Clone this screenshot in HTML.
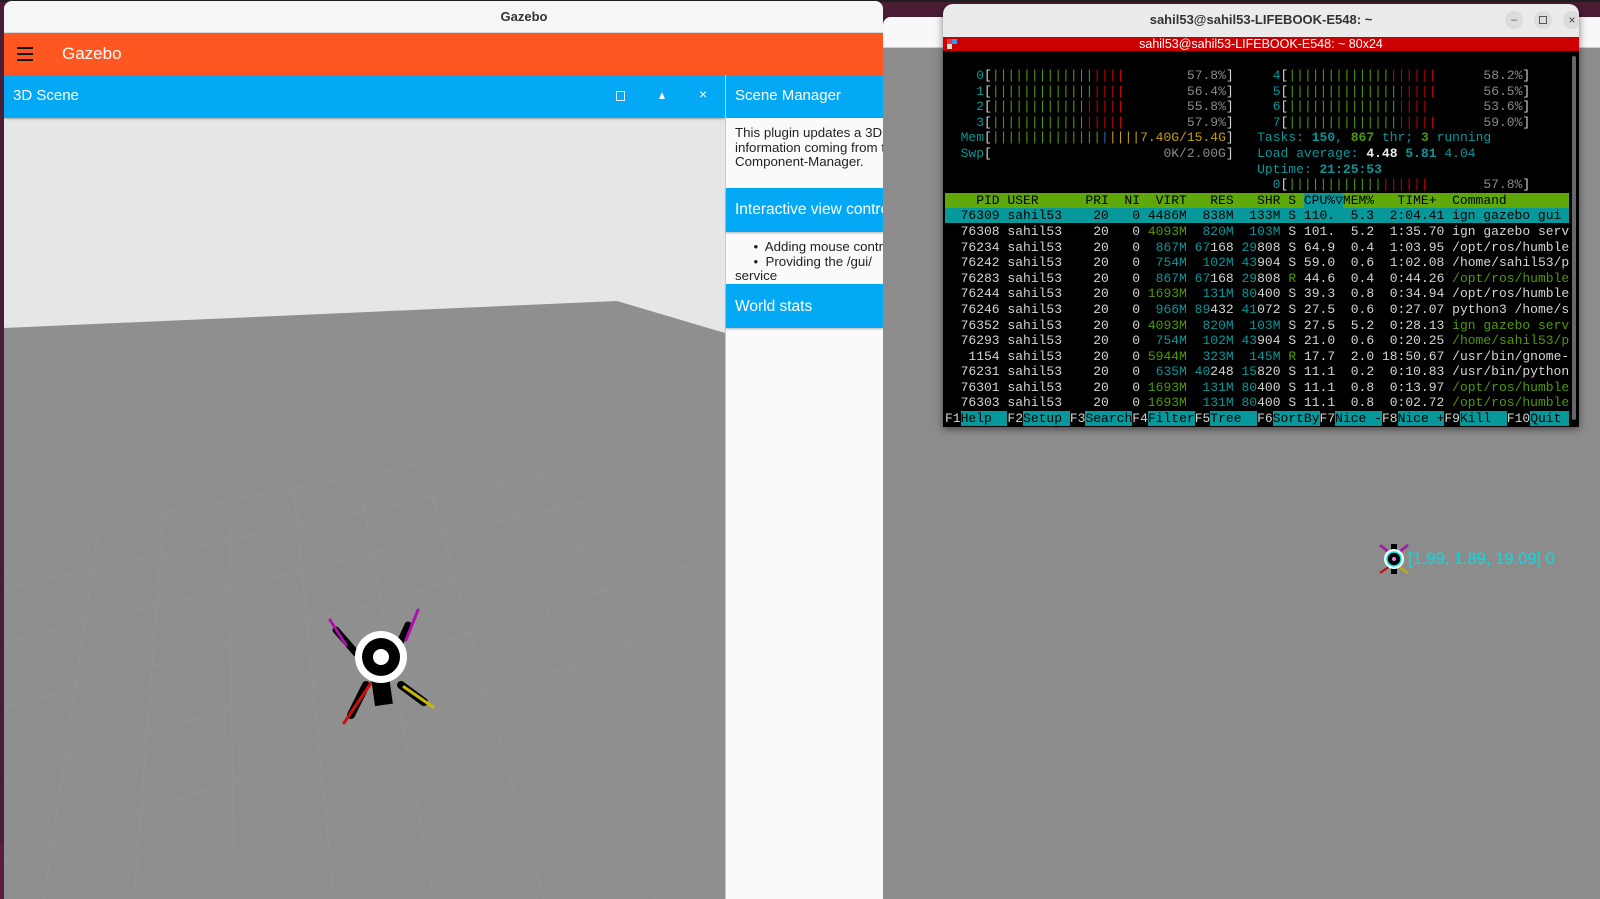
<!DOCTYPE html>
<html><head><meta charset="utf-8"><style>
*{margin:0;padding:0;box-sizing:border-box}
body{width:1600px;height:899px;overflow:hidden;background:#4a1d35;position:relative;font-family:"Liberation Sans",sans-serif}
.abs{position:absolute}
pre{font-family:"Liberation Mono",monospace;font-size:13px;line-height:15.6px;color:#d3d7cf;white-space:pre}
.g{color:#4e9a06}.r{color:#cc0000}.c{color:#06989a}.w{color:#eeeeec}.y{color:#c4a000}.b{color:#3465a4}.gr{color:#8a8a8a}
.hd{background:#5fa80a;color:#000}
.sel{background:#06989a;color:#000}
.fk{background:#06989a;color:#000}
.cy{background:#06989a;color:#000}
</style></head><body>
<div class="abs" style="left:0;top:0;width:1600px;height:2px;background:#1e1e1e"></div>
<div class="abs" style="left:883px;top:17px;width:717px;height:882px;background:#8c8c8c;border-radius:8px 0 0 0"></div>
<div class="abs" style="left:883px;top:17px;width:717px;height:31px;background:#f8f8f8;border-radius:8px 0 0 0;border-bottom:1px solid #ccc"></div>

<div class="abs" style="left:4px;top:1px;width:879px;height:898px;background:#fafafa;border-radius:8px 8px 0 0;overflow:hidden">
  <div class="abs" style="left:0;top:0;width:1040px;height:32px;background:#f6f6f6;border-bottom:1px solid #d8d8d8;text-align:center;font-size:13px;font-weight:bold;color:#333;line-height:32px">Gazebo</div>
  <div class="abs" style="left:0;top:32px;width:879px;height:42px;background:#ff5722"></div>
  <div class="abs" style="left:13px;top:46px;width:16px;height:2px;background:#111;box-shadow:0 6px 0 #111,0 12px 0 #111"></div>
  <div class="abs" style="left:58px;top:42px;font-size:17px;color:#fff;line-height:22px">Gazebo</div>
  <div class="abs" style="left:0;top:117px;width:721px;height:781px;background:#8f8f8f;overflow:hidden">
    <svg class="abs" style="left:0;top:0" width="721" height="781">
      <polygon points="0,0 721,0 721,215 613,183 0,210" fill="#e6e6e6"/>
      <g stroke="#9a9a9a" stroke-width="1" fill="none" opacity="0.45">
        <path d="M30,420 L500,330 M0,470 L540,355 M0,525 L585,382 M0,590 L630,412 M0,660 L690,445 M0,740 L721,495"/>
        <path d="M30,420 L0,460 M95,408 L40,781 M160,396 L130,781 M225,384 L230,781 M290,372 L330,781 M355,360 L430,781 M420,348 L540,781 M485,336 L650,781 M520,330 L721,700"/>
      </g>
    </svg>
    <svg class="abs" style="left:312px;top:487px" width="130" height="130" viewBox="0 0 130 130">
      <g stroke-linecap="round">
        <line x1="20" y1="25" x2="40" y2="48" stroke="#000" stroke-width="7"/>
        <line x1="92" y1="20" x2="82" y2="42" stroke="#000" stroke-width="7"/>
        <line x1="85" y1="80" x2="108" y2="97" stroke="#000" stroke-width="8"/>
        <line x1="50" y1="80" x2="35" y2="110" stroke="#000" stroke-width="8"/>
        <line x1="14" y1="15" x2="30" y2="40" stroke="#b010b0" stroke-width="3"/>
        <line x1="102" y1="5" x2="90" y2="35" stroke="#b010b0" stroke-width="3"/>
        <line x1="88" y1="82" x2="117" y2="102" stroke="#c8b800" stroke-width="3"/>
        <line x1="55" y1="78" x2="28" y2="118" stroke="#cc1010" stroke-width="3"/>
      </g>
      <rect x="57" y="72" width="18" height="28" fill="#000" transform="rotate(-8 66 86)"/>
      <circle cx="65" cy="52" r="26" fill="#fff"/>
      <circle cx="65" cy="52" r="19" fill="#000"/>
      <circle cx="65" cy="52" r="8" fill="#fff"/>
    </svg>
  </div>
  <div class="abs" style="left:0;top:74px;width:721px;height:43px;background:#03a9f4;box-shadow:0 1px 2px rgba(0,0,0,.3)"></div>
  <div class="abs" style="left:9px;top:86px;font-size:15px;color:#fff">3D Scene</div>
  <div class="abs" style="left:612px;top:90px;width:9px;height:10px;border:1px solid #e0f4ff"></div>
  <div class="abs" style="left:655px;top:91px;width:0;height:0;border-left:3px solid transparent;border-right:3px solid transparent;border-bottom:7px solid #fff"></div>
  <div class="abs" style="left:695px;top:85px;font-size:14px;color:#fff">×</div>
  <div class="abs" style="left:721px;top:74px;width:1px;height:825px;background:#c8c8c8"></div>
  <div class="abs" style="left:722px;top:74px;width:157px;height:43px;background:#03a9f4"></div>
  <div class="abs" style="left:731px;top:86px;font-size:15px;color:#fff;white-space:nowrap">Scene Manager</div>
  <div class="abs" style="left:731px;top:125px;font-size:13.3px;color:#222;line-height:14.7px;white-space:nowrap">This plugin updates a 3D scene<br>information coming from the<br>Component-Manager.</div>
  <div class="abs" style="left:722px;top:187px;width:157px;height:44px;background:#03a9f4;box-shadow:0 1px 2px rgba(0,0,0,.3)"></div>
  <div class="abs" style="left:731px;top:200px;font-size:15.5px;color:#fff;white-space:nowrap">Interactive view control</div>
  <div class="abs" style="left:731px;top:239px;font-size:13.3px;color:#222;line-height:14.7px;white-space:nowrap">&nbsp;&nbsp;&nbsp;&nbsp;&nbsp;•&nbsp; Adding mouse control<br>&nbsp;&nbsp;&nbsp;&nbsp;&nbsp;•&nbsp; Providing the /gui/<br>service</div>
  <div class="abs" style="left:722px;top:283px;width:157px;height:44px;background:#03a9f4;box-shadow:0 1px 2px rgba(0,0,0,.3)"></div>
  <div class="abs" style="left:731px;top:297px;font-size:15.5px;color:#fff;white-space:nowrap">World stats</div>
</div>
<div class="abs" style="left:0;top:843px;width:4px;height:56px;background:#5a1e3c"></div>

<svg class="abs" style="left:1376px;top:542px" width="36" height="34" viewBox="0 0 36 34">
  <line x1="4" y1="3" x2="14" y2="11" stroke="#a020a0" stroke-width="3"/>
  <line x1="32" y1="3" x2="22" y2="11" stroke="#a020a0" stroke-width="3"/>
  <line x1="4" y1="31" x2="14" y2="24" stroke="#c01010" stroke-width="2"/>
  <line x1="32" y1="31" x2="22" y2="24" stroke="#c0b000" stroke-width="2"/>
  <rect x="15" y="2" width="6" height="30" fill="#000"/>
  <circle cx="18" cy="17" r="10" fill="#fff"/>
  <circle cx="18" cy="17" r="7" fill="#000" stroke="#0ee" stroke-width="1.5"/>
  <circle cx="18" cy="17" r="2" fill="#e080e0"/>
</svg>
<div class="abs" style="left:1408px;top:550px;font-size:16.5px;color:#00e0e6;white-space:nowrap">[1.99, 1.89, 19.09] 0</div>

<div class="abs" style="left:943px;top:4px;width:636px;height:423px;background:#000;border-radius:10px 10px 0 0;overflow:hidden;box-shadow:0 2px 8px rgba(0,0,0,.5)">
  <div class="abs" style="left:0;top:0;width:636px;height:33px;background:#ebebeb;text-align:center;font-size:13px;font-weight:bold;color:#333;line-height:31px">sahil53@sahil53-LIFEBOOK-E548: ~</div>
  <div class="abs" style="left:562px;top:7px;width:18px;height:18px;border-radius:9px;background:#dcdcdc;font-size:11px;color:#555;text-align:center;line-height:18px">–</div>
  <div class="abs" style="left:591px;top:7px;width:18px;height:18px;border-radius:9px;background:#dcdcdc"><div style="margin:5px;width:8px;height:8px;border:1px solid #555"></div></div>
  <div class="abs" style="left:620px;top:7px;width:18px;height:18px;border-radius:9px;background:#dcdcdc;font-size:12px;color:#444;text-align:center;line-height:18px">×</div>
  <div class="abs" style="left:0;top:33px;width:636px;height:14px;background:#cc0000;text-align:center;font-size:12.5px;color:#fff;line-height:14px">sahil53@sahil53-LIFEBOOK-E548: ~ 80x24</div>
  <div class="abs" style="left:4px;top:35px;width:5px;height:5px;background:#e33;box-shadow:5px 0 0 #39f,0 5px 0 #ddd"></div>
  <div class="abs" style="left:629px;top:52px;width:4px;height:364px;background:#666;border-radius:2px"></div>
  <pre class="abs" style="left:2px;top:64px">
<span class="c">    0</span>[<span class="g">|||||||||||||</span><span class="r">||||</span>        <span class="gr">57.8%</span>]     <span class="c">4</span>[<span class="g">|||||||||||||</span><span class="r">||||||</span>      <span class="gr">58.2%</span>]
<span class="c">    1</span>[<span class="g">|||||||||||||</span><span class="r">||||</span>        <span class="gr">56.4%</span>]     <span class="c">5</span>[<span class="g">||||||||||||||</span><span class="r">|||||</span>      <span class="gr">56.5%</span>]
<span class="c">    2</span>[<span class="g">||||||||||||</span><span class="r">|||||</span>        <span class="gr">55.8%</span>]     <span class="c">6</span>[<span class="g">||||||||||||||</span><span class="r">||||</span>       <span class="gr">53.6%</span>]
<span class="c">    3</span>[<span class="g">||||||||||||</span><span class="r">|||||</span>        <span class="gr">57.9%</span>]     <span class="c">7</span>[<span class="g">||||||||||||||</span><span class="r">|||||</span>      <span class="gr">59.0%</span>]
<span class="c">  Mem</span>[<span class="g">||||||||||||||</span><span class="b">|</span><span class="y">||||7.40G/15.4G</span>]   <span class="c">Tasks: </span><span class="c" style="font-weight:bold">150</span><span class="c">, </span><span class="g" style="font-weight:bold">867</span><span class="c"> thr; </span><span class="g" style="font-weight:bold">3</span><span class="c"> running</span>
<span class="c">  Swp</span>[                      <span class="gr">0K/2.00G</span>]   <span class="c">Load average: </span><span class="w" style="font-weight:bold">4.48 </span><span class="c" style="font-weight:bold">5.81 </span><span class="c">4.04</span>
                                        <span class="c">Uptime: </span><span class="c" style="font-weight:bold">21:25:53</span>
                                        <span class="c">  0</span>[<span class="g">||||||||||||</span><span class="r">||||||</span>       <span class="gr">57.8%</span>]
<span class="hd">    PID USER      PRI  NI  VIRT   RES   SHR S <span class="cy">CPU%▽</span>MEM%   TIME+  Command        </span>
<span class="sel">  76309 sahil53    20   0 4486M  838M  133M S 110.  5.3  2:04.41 ign gazebo gui </span>
  76308 sahil53    20   0 <span class="g">4093M</span>  <span class="c">820M</span>  <span class="c">103M</span> S 101.  5.2  1:35.70 ign gazebo serv
  76234 sahil53    20   0  <span class="c">867M</span> <span class="c">67</span>168 <span class="c">29</span>808 S 64.9  0.4  1:03.95 /opt/ros/humble
  76242 sahil53    20   0  <span class="c">754M</span>  <span class="c">102M</span> <span class="c">43</span>904 S 59.0  0.6  1:02.08 /home/sahil53/p
  76283 sahil53    20   0  <span class="c">867M</span> <span class="c">67</span>168 <span class="c">29</span>808 <span class="g">R</span> 44.6  0.4  0:44.26 <span class="g">/opt/ros/humble</span>
  76244 sahil53    20   0 <span class="g">1693M</span>  <span class="c">131M</span> <span class="c">80</span>400 S 39.3  0.8  0:34.94 /opt/ros/humble
  76246 sahil53    20   0  <span class="c">966M</span> <span class="c">89</span>432 <span class="c">41</span>072 S 27.5  0.6  0:27.07 python3 /home/s
  76352 sahil53    20   0 <span class="g">4093M</span>  <span class="c">820M</span>  <span class="c">103M</span> S 27.5  5.2  0:28.13 <span class="g">ign gazebo serv</span>
  76293 sahil53    20   0  <span class="c">754M</span>  <span class="c">102M</span> <span class="c">43</span>904 S 21.0  0.6  0:20.25 <span class="g">/home/sahil53/p</span>
   1154 sahil53    20   0 <span class="g">5944M</span>  <span class="c">323M</span>  <span class="c">145M</span> <span class="g">R</span> 17.7  2.0 18:50.67 /usr/bin/gnome-
  76231 sahil53    20   0  <span class="c">635M</span> <span class="c">40</span>248 <span class="c">15</span>820 S 11.1  0.2  0:10.83 /usr/bin/python
  76301 sahil53    20   0 <span class="g">1693M</span>  <span class="c">131M</span> <span class="c">80</span>400 S 11.1  0.8  0:13.97 <span class="g">/opt/ros/humble</span>
  76303 sahil53    20   0 <span class="g">1693M</span>  <span class="c">131M</span> <span class="c">80</span>400 S 11.1  0.8  0:02.72 <span class="g">/opt/ros/humble</span>
F1<span class="fk">Help  </span>F2<span class="fk">Setup </span>F3<span class="fk">Search</span>F4<span class="fk">Filter</span>F5<span class="fk">Tree  </span>F6<span class="fk">SortBy</span>F7<span class="fk">Nice -</span>F8<span class="fk">Nice +</span>F9<span class="fk">Kill  </span>F10<span class="fk">Quit </span></pre>
</div>
</body></html>
